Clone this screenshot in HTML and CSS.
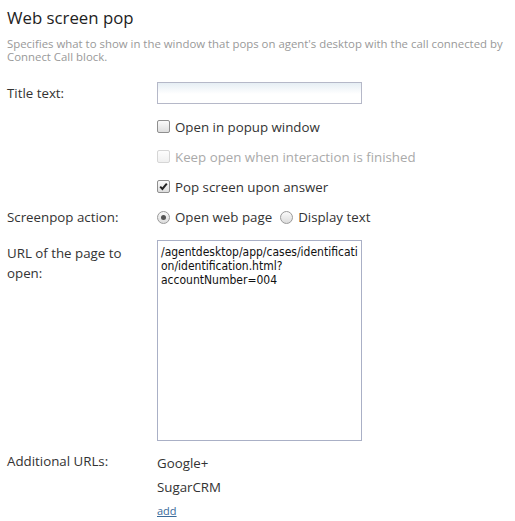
FILE: index.html
```html
<!DOCTYPE html>
<html>
<head>
<meta charset="utf-8">
<link rel="stylesheet" href="styles.css">
</head>
<body>
<div class="panel">
  <h1 class="title">Web screen pop</h1>
  <p class="desc">Specifies what to show in the window that pops on agent's desktop with the call connected by Connect Call block.</p>
  <div class="form">
    <div class="row first">
      <div class="label">Title text:</div>
      <div class="field"><input class="text" type="text"></div>
    </div>
    <div class="row">
      <div class="label"></div>
      <div class="field"><label class="check"><span class="cb"></span>Open in popup window</label></div>
    </div>
    <div class="row">
      <div class="label"></div>
      <div class="field"><label class="check disabled"><span class="cb"></span>Keep open when interaction is finished</label></div>
    </div>
    <div class="row">
      <div class="label"></div>
      <div class="field"><label class="check"><span class="cb checked"><svg viewBox="0 0 13 13" width="13" height="13"><path d="M3.2 6.6 L5.4 8.9 L9.8 3.6" fill="none" stroke="#222" stroke-width="2"/></svg></span>Pop screen upon answer</label></div>
    </div>
    <div class="row">
      <div class="label">Screenpop action:</div>
      <div class="field radios">
        <label class="check"><span class="rb on"></span>Open web page</label>
        <label class="check"><span class="rb"></span>Display text</label>
      </div>
    </div>
    <div class="row url">
      <div class="label">URL of the page to open:</div>
      <div class="field"><div class="area">/agentdesktop/app/cases/identificati<br>on/identification.html?<br>accountNumber=004</div></div>
    </div>
    <div class="row addl">
      <div class="label">Additional URLs:</div>
      <div class="field list">
        <div class="item">Google+</div>
        <div class="item">SugarCRM</div>
        <a class="add" href="#">add</a>
      </div>
    </div>
  </div>
</div>
</body>
</html>
```

FILE: styles.css
```css
* { box-sizing: border-box; }
html, body { margin: 0; padding: 0; background: #fff; }
body { font-family: "Open Sans", "Noto Sans", sans-serif; color: #333; }
.panel { padding: 6px 7px; width: 515px; }
.title { font-size: 16.8px; font-weight: normal; margin: 0; line-height: 24px; color: #222; }
.desc { font-size: 11.4px; color: #999; margin: 8px 0 0; line-height: 12.5px; width: 505px; }
.form { margin-top: 19px; display: flex; flex-direction: column; }
.row { display: flex; min-height: 30px; align-items: center; }
.label { width: 150px; padding-right: 10px; font-size: 13.3px; line-height: 20px; flex: none; }
.field { font-size: 13.3px; }
.text { display: block; width: 205px; height: 22px; border: 1px solid #b5b8c8; border-radius: 0; background: linear-gradient(#e6eef4, #fff 55%); padding: 2px 4px; margin: 0; }
.row.first { min-height: 22px; margin-bottom: 8px; }
.check { display: inline-flex; align-items: center; gap: 5px; line-height: 20px; }
.check.disabled { color: #aaa; }
.cb { width: 13px; height: 13px; border: 1px solid #8f8f8f; border-radius: 2px; background: linear-gradient(#fafafa, #dedede); display: inline-block; position: relative; flex: none; }
.cb svg { position: absolute; left: -1px; top: -1px; }
.disabled .cb { border-color: #d6d6d6; background: linear-gradient(#fdfdfd, #f0f0f0); }
.rb { width: 13px; height: 13px; border: 1px solid #9a9a9a; border-radius: 50%; background: linear-gradient(#fafafa, #dcdcdc); display: inline-block; position: relative; flex: none; }
.rb.on::after { content: ""; position: absolute; left: 3px; top: 3px; width: 5px; height: 5px; border-radius: 50%; background: #555; }
.radios { display: flex; gap: 8px; }
.row.url { align-items: flex-start; margin-top: 8px; }
.row.url .label { padding-top: 3px; }
.area { width: 205px; height: 201px; border: 1px solid #aab0c6; font-family: "DejaVu Sans Condensed", "DejaVu Sans", sans-serif; font-size: 12px; line-height: 14px; padding: 4px 3px; white-space: nowrap; overflow: hidden; color: #111; }
.row.addl { align-items: flex-start; margin-top: 10px; }
.list { display: flex; flex-direction: column; }
.item { line-height: 24px; }
.add { font-size: 11px; color: #3a6a9a; line-height: 24px; text-decoration: underline; }
```
